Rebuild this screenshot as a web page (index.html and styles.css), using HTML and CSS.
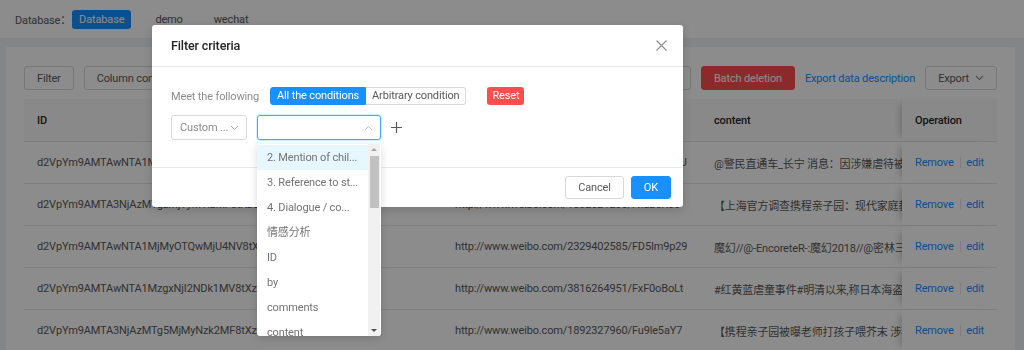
FILE: index.html
```html
<!DOCTYPE html>
<html lang="en">
<head>
    <meta charset="UTF-8">
    <meta name="viewport" content="width=device-width, initial-scale=1.0">
    <title>Data list</title>
    <link rel="stylesheet" href="styles.css">
</head>
<body>

<!-- Database switch -->
<div class="topbar">
    <span class="db-label">Database：</span>
    <span class="db-tab active">Database</span>
    <span class="db-tab">demo</span>
    <span class="db-tab">wechat</span>
</div>

<!-- Main card -->
<div class="page">
    <div class="card">
        <div class="toolbar">
            <div class="tool-group">
                <button class="btn">Filter</button>
                <button class="btn">Column configuration</button>
            </div>
            <div class="tool-group">
                <button class="btn">Import data</button>
                <button class="btn btn-danger">Batch deletion</button>
                <a class="link" href="#">Export data description</a>
                <button class="btn">Export
                    <svg class="chev" width="9" height="6" viewBox="0 0 9 6"><path d="M1 1 L4.5 4.5 L8 1" fill="none" stroke="currentColor" stroke-width="1.1"/></svg>
                </button>
            </div>
        </div>

        <div class="grid">
            <div class="row head">
                <div class="cell">ID</div>
                <div class="cell"></div>
                <div class="cell">content</div>
                <div class="cell op">Operation</div>
            </div>
            <div class="row">
                <div class="cell">d2VpYm9AMTAwNTA1MzA0NDI4MTMxMF8tXzQyMTkzNzY1</div>
                <div class="cell">http://www.weibo.com/5044281310/FxGnkpBxU</div>
                <div class="cell">@警民直通车_长宁 消息：因涉嫌虐待被看</div>
                <div class="cell op"><a href="#">Remove</a><i class="sep"></i><a href="#">edit</a></div>
            </div>
            <div class="row">
                <div class="cell">d2VpYm9AMTA3NjAzMTgzMjYyMTIzMF8tXzQyMTkwNDk5</div>
                <div class="cell">http://www.weibo.com/1832621230/FxaBcKo6</div>
                <div class="cell">【上海官方调查携程亲子园：现代家庭教</div>
                <div class="cell op"><a href="#">Remove</a><i class="sep"></i><a href="#">edit</a></div>
            </div>
            <div class="row">
                <div class="cell">d2VpYm9AMTAwNTA1MjMyOTQwMjU4NV8tXzQyMTg3MjU0</div>
                <div class="cell">http://www.weibo.com/2329402585/FD5Im9p29</div>
                <div class="cell">魔幻//@-EncoreteR-:魔幻2018//@密林三</div>
                <div class="cell op"><a href="#">Remove</a><i class="sep"></i><a href="#">edit</a></div>
            </div>
            <div class="row">
                <div class="cell">d2VpYm9AMTAwNTA1MzgxNjI2NDk1MV8tXzQyMTgxMjA3</div>
                <div class="cell">http://www.weibo.com/3816264951/FxF0oBoLt</div>
                <div class="cell">#红黄蓝虐童事件#明清以来,称日本海盗为</div>
                <div class="cell op"><a href="#">Remove</a><i class="sep"></i><a href="#">edit</a></div>
            </div>
            <div class="row">
                <div class="cell">d2VpYm9AMTA3NjAzMTg5MjMyNzk2MF8tXzQyMTc2NjMx</div>
                <div class="cell">http://www.weibo.com/1892327960/Fu9le5aY7</div>
                <div class="cell">【携程亲子园被曝老师打孩子喂芥末 涉事</div>
                <div class="cell op"><a href="#">Remove</a><i class="sep"></i><a href="#">edit</a></div>
            </div>
        </div>
    </div>
</div>

<!-- Filter dialog -->
<div class="mask"></div>
<div class="modal">
    <div class="modal-head">
        <span class="modal-title">Filter criteria</span>
        <svg class="close" width="11" height="11" viewBox="0 0 11 11"><path d="M0.5 0.5 L10.5 10.5 M10.5 0.5 L0.5 10.5" stroke="currentColor" stroke-width="1.1"/></svg>
    </div>
    <div class="modal-body">
        <div class="cond-row">
            <span class="muted">Meet the following</span>
            <div class="segment">
                <span class="seg active">All the conditions</span>
                <span class="seg">Arbitrary condition</span>
            </div>
            <span class="btn-reset">Reset</span>
        </div>
        <div class="cond-row">
            <div class="select narrow">
                <span>Custom ...</span>
                <svg width="9" height="6" viewBox="0 0 9 6"><path d="M1 1 L4.5 4.5 L8 1" fill="none" stroke="currentColor" stroke-width="1"/></svg>
            </div>
            <div class="select wide focus">
                <span></span>
                <svg width="9" height="6" viewBox="0 0 9 6"><path d="M1 5 L4.5 1.5 L8 5" fill="none" stroke="currentColor" stroke-width="1"/></svg>
            </div>
            <svg class="plus" width="11" height="11" viewBox="0 0 11 11"><path d="M5.5 0 V11 M0 5.5 H11" stroke="currentColor" stroke-width="1.2"/></svg>
        </div>
    </div>
    <div class="modal-foot">
        <button class="btn">Cancel</button>
        <button class="btn btn-primary">OK</button>
    </div>
</div>

<!-- Open select menu -->
<div class="dropdown">
    <ul class="options">
        <li class="hover">2. Mention of chil...</li>
        <li>3. Reference to st...</li>
        <li>4. Dialogue / co...</li>
        <li>情感分析</li>
        <li>ID</li>
        <li>by</li>
        <li>comments</li>
        <li>content</li>
    </ul>
    <div class="scrollbar">
        <span class="arrow up"></span>
        <span class="thumb"></span>
        <span class="track"></span>
        <span class="arrow down"></span>
    </div>
</div>

</body>
</html>
```

FILE: styles.css
```css
* {
    box-sizing: border-box;
}

body {
    margin: 0;
    font-family: Roboto, "Noto Sans CJK SC", sans-serif;
    font-size: 11px;
    letter-spacing: -0.15px;
    color: #595959;
    background-color: #f0f2f5;
    height: 350px;
    overflow: hidden;
}

button {
    font-family: inherit;
    font-size: inherit;
    letter-spacing: inherit;
}

/* Database switch */
.topbar {
    height: 38px;
    background-color: #fff;
    display: flex;
    align-items: center;
    padding-left: 15px;
}

.db-label {
    color: #595959;
    margin-right: 1px;
}

.db-tab {
    height: 19px;
    line-height: 19px;
    padding: 0 7px;
    border-radius: 3px;
    color: #595959;
    margin-right: 17px;
}

.db-tab.active {
    background-color: #1890ff;
    color: #fff;
}

/* Card */
.page {
    padding: 9px 9px 0 6px;
}

.card {
    background-color: #fff;
    padding: 19px 18px;
    height: 320px;
}

.toolbar {
    display: flex;
    justify-content: space-between;
    align-items: center;
    margin-bottom: 9px;
}

.tool-group {
    display: flex;
    align-items: center;
    gap: 10px;
}

.btn {
    height: 24px;
    padding: 0 12px;
    border: 1px solid #d9d9d9;
    border-radius: 3px;
    background-color: #fff;
    color: #595959;
    display: inline-flex;
    align-items: center;
    gap: 6px;
    white-space: nowrap;
}

.btn-danger {
    background-color: #ff4d4f;
    border-color: #ff4d4f;
    color: #fff;
}

.btn-primary {
    background-color: #1890ff;
    border-color: #1890ff;
    color: #fff;
}

.link {
    color: #1890ff;
    text-decoration: none;
}

.chev {
    color: #8c8c8c;
}

/* Table */
.row {
    display: grid;
    grid-template-columns: 418px 259px 201px 95px;
    height: 42px;
    border-bottom: 1px solid #e8e8e8;
}

.row.head {
    height: 43px;
    color: #262626;
    font-weight: 500;
}

.cell {
    padding: 0 13px;
    display: flex;
    align-items: center;
    white-space: nowrap;
    overflow: hidden;
    background-color: #fff;
}

.row.head .cell {
    background-color: #fafafa;
}

.cell.op {
    box-shadow: -7px 0 7px -5px rgba(0, 0, 0, 0.2);
    position: relative;
}

.cell.op a {
    color: #1890ff;
    text-decoration: none;
}

.sep {
    width: 1px;
    height: 11px;
    background-color: #e8e8e8;
    margin: 0 6px;
}

/* Dialog */
.mask {
    position: fixed;
    inset: 0;
    background-color: rgba(0, 0, 0, 0.45);
}

.modal {
    position: absolute;
    left: 152px;
    top: 25px;
    width: 531px;
    background-color: #fff;
    border-radius: 3px;
    box-shadow: 0 3px 10px rgba(0, 0, 0, 0.15);
}

.modal-head {
    height: 42px;
    padding: 0 16px 0 19px;
    border-bottom: 1px solid #e8e8e8;
    display: flex;
    justify-content: space-between;
    align-items: center;
}

.modal-title {
    font-size: 12.6px;
    font-weight: 500;
    color: #262626;
}

.close {
    color: #8c8c8c;
}

.modal-body {
    padding: 20px 19px 27px;
    display: flex;
    flex-direction: column;
    gap: 10px;
}

.cond-row {
    display: flex;
    align-items: center;
}

.muted {
    color: #8c8c8c;
    margin-right: 11px;
}

.segment {
    display: flex;
}

.seg {
    height: 18px;
    line-height: 16px;
    padding: 0 6px;
    border: 1px solid #d9d9d9;
    color: #595959;
}

.seg:first-child {
    border-radius: 3px 0 0 3px;
}

.seg:last-child {
    border-left: none;
    border-radius: 0 3px 3px 0;
}

.seg.active {
    background-color: #1890ff;
    border-color: #1890ff;
    color: #fff;
}

.btn-reset {
    margin-left: 21px;
    height: 18px;
    line-height: 18px;
    padding: 0 5px;
    border-radius: 3px;
    background-color: #ff4d4f;
    color: #fff;
}

.select {
    height: 25px;
    border: 1px solid #d9d9d9;
    border-radius: 3px;
    display: flex;
    justify-content: space-between;
    align-items: center;
    padding: 0 7px 0 8px;
    color: #8c8c8c;
    white-space: nowrap;
}

.select svg {
    color: #a6a6a6;
    flex-shrink: 0;
}

.select.narrow {
    width: 76px;
    margin-right: 10px;
}

.select.wide {
    width: 124px;
}

.select.focus {
    border-color: #40a9ff;
    box-shadow: 0 0 0 1px rgba(24, 144, 255, 0.15);
}

.select.focus svg {
    color: #bfbfbf;
}

.plus {
    margin-left: 10px;
    color: #595959;
}

.modal-foot {
    border-top: 1px solid #e8e8e8;
    padding: 8px 12px;
    display: flex;
    justify-content: flex-end;
    gap: 7px;
}

.modal-foot .btn {
    height: 23px;
}

/* Select menu */
.dropdown {
    position: absolute;
    left: 257px;
    top: 144px;
    width: 124px;
    height: 192px;
    background-color: #fff;
    border-radius: 3px;
    box-shadow: 0 2px 8px rgba(0, 0, 0, 0.15);
    display: flex;
    overflow: hidden;
}

.options {
    list-style: none;
    margin: 0;
    padding: 1px 0 0 0;
    flex: 1;
}

.options li {
    height: 25px;
    line-height: 25px;
    padding: 0 10px;
    white-space: nowrap;
    overflow: hidden;
    color: #737373;
}

.options li.hover {
    background-color: #e6f7ff;
}

.scrollbar {
    width: 12px;
    background-color: #f1f1f1;
    display: flex;
    flex-direction: column;
    align-items: center;
    margin-right: 1px;
}

.arrow {
    width: 0;
    height: 0;
    border-left: 3px solid transparent;
    border-right: 3px solid transparent;
    margin: 4px 0;
}

.arrow.up {
    border-bottom: 3px solid #a3a3a3;
}

.arrow.down {
    border-top: 3px solid #505050;
}

.thumb {
    width: 9px;
    height: 52px;
    margin-top: 1px;
    background-color: #c1c1c1;
}

.track {
    flex: 1;
}
```
